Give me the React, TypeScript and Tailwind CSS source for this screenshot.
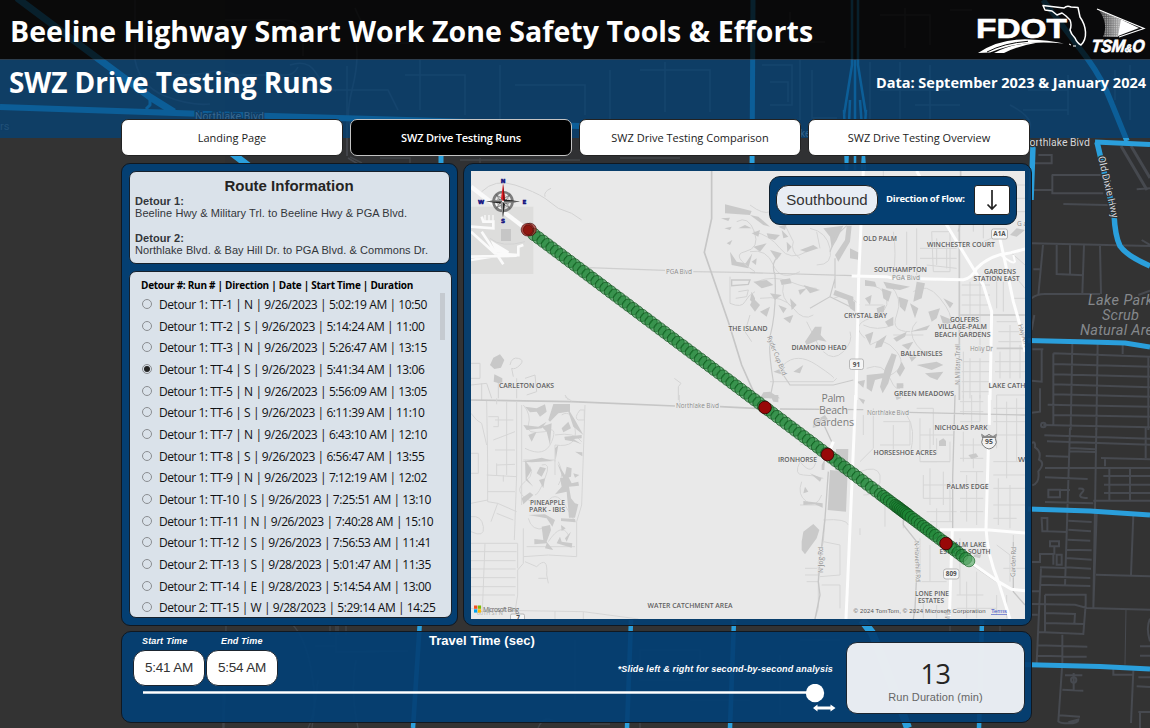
import React from 'react';

const runs = [
  'Detour 1: TT-1 | N | 9/26/2023 | 5:02:19 AM | 10:50',
  'Detour 1: TT-2 | S | 9/26/2023 | 5:14:24 AM | 11:00',
  'Detour 1: TT-3 | N | 9/26/2023 | 5:26:47 AM | 13:15',
  'Detour 1: TT-4 | S | 9/26/2023 | 5:41:34 AM | 13:06',
  'Detour 1: TT-5 | N | 9/26/2023 | 5:56:09 AM | 13:05',
  'Detour 1: TT-6 | S | 9/26/2023 | 6:11:39 AM | 11:10',
  'Detour 1: TT-7 | N | 9/26/2023 | 6:43:10 AM | 12:10',
  'Detour 1: TT-8 | S | 9/26/2023 | 6:56:47 AM | 13:55',
  'Detour 1: TT-9 | N | 9/26/2023 | 7:12:19 AM | 12:02',
  'Detour 1: TT-10 | S | 9/26/2023 | 7:25:51 AM | 13:10',
  'Detour 1: TT-11 | N | 9/26/2023 | 7:40:28 AM | 15:10',
  'Detour 1: TT-12 | S | 9/26/2023 | 7:56:53 AM | 11:41',
  'Detour 2: TT-13 | S | 9/28/2023 | 5:01:47 AM | 11:35',
  'Detour 2: TT-14 | E | 9/28/2023 | 5:14:54 AM | 13:00',
  'Detour 2: TT-15 | W | 9/28/2023 | 5:29:14 AM | 14:25',
];

const tabs = [
  { label: 'Landing Page', on: false },
  { label: 'SWZ Drive Testing Runs', on: true },
  { label: 'SWZ Drive Testing Comparison', on: false },
  { label: 'SWZ Drive Testing Overview', on: false },
];

/* ---------- dark street map behind the page ---------- */

function Backdrop() {
  return (
    <svg className="absolute inset-0 h-[728px] w-[1150px]" viewBox="0 0 1150 728" fill="none">
      <rect width="1150" height="728" fill="#333333" />
      <rect y="0" x="225" width="925" height="200" fill="#303133" />
      <g stroke="#46494f" strokeWidth="1.6">
        <path d="M135 0v60q5 26 30 36t45 8M150 72q35 6 60 0t48 22M225 20h60q12 0 18 12v24M228 75h58q8 0 12-8M347 66v90M352 30q10 20 0 60t8 46M290 65q18-6 26 8t20 18M300 90h88l10 20M348 158l10 6M405 75h60v40M420 60v50M500 65v60M515 85h70v30M610 70v55M640 70h70v42M665 62v50" />
        <path d="M762 65h30v40h-22M770 82h18v20M800 60v60M812 70v48h25M870 62v70M880 90h70M900 62v60M915 105h45M930 65v70M1028 90h40v20h-45M1068 75v40M1010 105q35 18 10 34M1115 70v30M1130 65v55M790 12v30h35M880 15h50v30M905 8v40M950 10h22M355 8q10 25 25 35h30" />
        <path d="M1121 146l26 44M1131 146l19 32" strokeWidth="3" />
      </g>
      <g transform="translate(1025 130) scale(.33333)" stroke="#474a50" strokeWidth="6">
        <path d="M20 100H80V75H40M25 180H80M80 135H230M82 135V190H235M115 222L270 226M20 340L375 348M54 345L40 495M25 418H44M95 345V432L175 436M135 345V435M177 345L172 490M225 348L228 492M20 505Q35 492 60 492L225 492M20 600L28 555M335 178L375 175M340 495L375 482M350 330L375 345" />
        <path d="M22 658H55M50 660V755L20 752M45 775V845L20 848M85 670L375 680M85 670V885M85 702L375 710M85 733L375 740M85 763L375 772M85 793L375 800M68 824L375 830M85 855L375 860M55 885L375 892M142 640L137 900M218 640L214 900M293 645V672M370 680V900" />
        <circle cx="55" cy="885" r="7" />
      </g>
      <g transform="translate(1025 428) scale(.33333)" stroke="#474a50" strokeWidth="6">
        <path d="M135 0L120 475M214 0L205 540M58 22L375 32M66 40L375 50M362 0V90M135 60L210 64M135 70L210 72M62 84L132 86M60 120H375M228 90L375 94M240 90V115M60 148L188 153M253 122V218M315 122V218M235 144H375M237 170H375M237 195H375M205 218H375M70 185H105V208H70ZM105 186H135M160 182Q185 180 170 195T188 210M60 222L205 226M20 45Q32 38 30 58Q50 70 42 95Q62 105 40 130Q45 165 22 172M50 270H67V310H52ZM67 310L125 312M130 278L200 282M130 305L198 310M128 335L196 338M126 365L200 367M124 390L200 395M122 418L198 422M45 445L196 450M45 470L196 474M75 340H102V355H75ZM88 355V380M20 402H45V378H85V410M45 418L120 420M95 380H110V410H95ZM215 258L205 540M325 262L318 440M213 440L375 445M20 528L150 530L185 540L375 545M60 500H182V530L175 618L40 612M60 500V610M62 555L150 558L148 588M60 585L175 588M48 420L35 705M40 652L187 656M38 683L185 686M112 620V705L100 880Q105 886 130 886Q160 886 160 875L130 883M103 862L165 866M120 742H172M146 735V785M112 785L175 788M265 720V740H325M325 728L318 885M340 852H375M345 855V900M375 572Q362 600 375 640M345 655H375M345 683H375M335 775L375 777M340 748H375M20 490H42M20 560H38" />
        <circle cx="146" cy="756" r="8" />
        <path d="M303 545L300 710" strokeWidth="3" />
      </g>
      <g stroke="#424549" strokeWidth="1.4">
        <path d="M226 626l-2 102M230 632q-8 40-7 96M292 624q14 14 20 50t-4 54M315 646h20M336 624v28l72-1M318 680l-6 48M356 660q-6 30 2 68M330 626v9M338 626v9M346 626v9M240 690q8-12 22-4M538 728q6-14 18-6M590 724h20M640 720v8M700 722h25M460 160h120M480 158v6M620 158h60M350 157l12 6M380 158h30v6" />
        <path d="M640 650h60v30h-60zM690 700h60M780 655v60M800 640h40M575 640v60M950 626v6h30M1000 626v8" />
      </g>
      <g stroke="#2a9fdc" strokeLinejoin="round">
        <path d="M17 -2L100 60L150 97L174 112M224 147L250 167" strokeWidth="7" />
        <path d="M150 97v8l-4 4" strokeWidth="3" />
        <path d="M0 107L190 113.500L440 121L1031 142" strokeWidth="6" />
        <path d="M1095 142L1150 144.500" strokeWidth="5" />
        <path d="M441 120v50M753 0l-1 170" strokeWidth="5" />
        <path d="M852 0v65l-8 50M858 0v65l8 50M855 60v50M844 110l2 60M850 100l-3 70M866 110l-4 60M860 100l5 70M855 110v60" strokeWidth="2.500" />
        <path d="M1043 0L1087 58Q1103 80 1112 104L1127 141" strokeWidth="5.500" />
        <path d="M1097 142L1114 214Q1115 236 1120 246Q1127 256 1150 266M1033 146L1031 200" strokeWidth="5.500" />
        <path d="M1028 340.500L1090 342L1125 343L1150 347M1028 509L1090 511L1150 515M1020 664.500L1100 666.500L1150 669" strokeWidth="5" />
        <path d="M420 620L413 728M631 620L627 728M734 620L730 728M982 620L979 728" strokeWidth="4.500" />
        <path d="M862 620L872 633L881 655L908 728" strokeWidth="8" />
      </g>
      <g fontFamily="Roboto, sans-serif" stroke="#303133" strokeWidth="2.500" paintOrder="stroke">
        <text x="195" y="120" fontSize="10.500" fill="#b8bcc2" textLength="69">Northlake Blvd</text>
        <text x="1022" y="146" fontSize="10.500" fill="#d5d8dc" textLength="68">Northlake Blvd</text>
        <text x="0" y="130" fontSize="11" fill="#6c7075">rs</text>
        <text x="800" y="137" fontSize="10" fill="#a8abb0">ke</text>
        <text transform="translate(1098 157) rotate(77)" fontSize="10" fill="#d5d8dc" textLength="63">Old Dixie Hwy</text>
        <g fontStyle="italic" fontSize="14.500" fill="#85888c" stroke="none">
          <text x="1088" y="305" textLength="65">Lake Park</text>
          <text x="1102" y="320" textLength="37">Scrub</text>
          <text x="1080" y="335" textLength="81">Natural Area</text>
        </g>
      </g>
    </svg>
  );
}

/* ---------- logos ---------- */

function Logos() {
  return (
    <svg className="h-[56px] w-[178px] shrink-0" viewBox="972 1 178 56" fill="none">
      <defs>
        <pattern id="dots" width="1.800" height="1.800" patternUnits="userSpaceOnUse">
          <rect width="1.100" height="1.100" fill="#fff" />
        </pattern>
        <linearGradient id="fade" x1="0" x2="1">
          <stop offset="0" stopColor="#fff" stopOpacity=".1" />
          <stop offset="1" stopColor="#fff" stopOpacity=".75" />
        </linearGradient>
      </defs>
      <text x="976" y="38.500" fontFamily="'Liberation Sans', sans-serif" fontWeight="700" fontSize="27.500" fill="#fff" stroke="#fff" strokeWidth=".6" textLength="91" lengthAdjust="spacingAndGlyphs">FDOT</text>
      <path d="M1043 6.500L1064 9Q1067 6 1071 8L1078 8.500L1080 18Q1085 25 1085.500 33Q1086 41 1081 46Q1077 44 1075 39Q1071 35 1070 31Q1072 26 1070 21L1066 17L1062 14L1057 16L1052 12L1045 11Z" stroke="#fff" strokeWidth="1.500" strokeLinejoin="round" />
      <path d="M1069 45l2 1M1073 47l3 0" stroke="#fff" />
      <path d="M978 54Q1001 39 1030 40.500Q1048 41 1064 44.500Q1034 41.500 1010 47Q1000 49.500 990 53.500Z" fill="#fff" />
      <path d="M994 54Q1012 44 1038 43.500Q1018 47 1004 54Z" fill="#fff" />
      <path d="M987 53Q1004 44 1028 42.300" stroke="#0b0b0b" strokeWidth="1" />
      <path d="M1098 10L1124 22L1118 38L1103 38Q1109 24 1098 10Z" fill="url(#dots)" fillOpacity=".5" />
      <path d="M1098 10L1124 22L1118 38L1103 38Q1109 24 1098 10Z" fill="url(#fade)" />
      <path d="M1097 10L1144 29.500L1119 38" stroke="#fff" strokeWidth="1.200" />
      <path d="M1121 20.500L1139 29L1118 37Z" fill="#fff" />
      <text transform="translate(1091 52.500) skewX(-6)" fontFamily="'Liberation Sans', sans-serif" fontStyle="italic" fontWeight="700" fontSize="17.500" fill="#fff" stroke="#fff" strokeWidth=".7" textLength="53" lengthAdjust="spacingAndGlyphs">
        TSM<tspan fontSize="11">&amp;</tspan>O
      </text>
    </svg>
  );
}

/* ---------- route map ---------- */

type Label = [string, number, number, number];

const places: Label[] = [
  ['OLD PALM', 863, 241, 34],
  ['WINCHESTER COURT', 927, 246.5, 68],
  ['SOUTHAMPTON', 874, 271.5, 53],
  ['GARDENS', 984, 274, 32],
  ['STATION EAST', 973.5, 281, 46],
  ['CRYSTAL BAY', 844, 318, 43],
  ['GOLFERS', 950, 322, 29],
  ['VILLAGE-PALM', 938, 329, 49],
  ['BEACH GARDENS', 934.5, 336.5, 56],
  ['THE ISLAND', 728.5, 330.5, 39],
  ['DIAMOND HEAD', 791.5, 350, 55],
  ['BALLENISLES', 900.5, 355.5, 42],
  ['LAKE CATHERINE', 988.5, 388, 57],
  ['GREEN MEADOWS', 894, 396, 60],
  ['CARLETON OAKS', 499, 388, 55],
  ['NICHOLAS PARK', 934.5, 430, 53],
  ['HORSESHOE ACRES', 873.5, 455, 63],
  ['IRONHORSE', 778, 462, 39],
  ['WEST', 1018, 462, 20],
  ['PALMS EDGE', 946.5, 488.5, 42],
  ['PINEAPPLE', 530, 505, 35],
  ['PARK - IBIS', 529, 512, 36],
  ['PALM LAKE', 950, 547, 36],
  ['ESTATES SOUTH', 939.5, 554, 51],
  ['LONE PINE', 915, 596, 34],
  ['ESTATES', 918, 603, 26],
  ['WATER CATCHMENT AREA', 647.5, 607.5, 85],
];

const redStops = [
  [765, 407.5],
  [827.5, 454.5],
  [946, 543.5],
];

function routePoints() {
  const pts: number[][] = [];
  let x = 534;
  while (x < 969) {
    const y = x < 765 ? 230 + ((x - 528) * 177.5) / 237 : x < 946 ? 407.5 + ((x - 765) * 136) / 181 : 543.5 + ((x - 946) * 17.5) / 23;
    pts.push([x, y]);
    x += x < 880 ? 4.5 : x < 893 ? 3 : x < 907 ? 1.6 : x < 935 ? 3 : 3.8;
  }
  return pts;
}

function RouteMap() {
  return (
    <svg className="block h-[448px] w-[554px]" viewBox="471 171 554 448" fill="none">
      <rect x="471" y="171" width="554" height="448" fill="#e9e9e9" />

      {/* north-west quarter */}
      <g transform="translate(465 165) scale(.33333)">
        <path d="M18 125H205V327H18Z" fill="#dddddc" />
        <path d="M108 192h30v36h-30z" fill="#c6c6c6" />
        <g stroke="#fafafa" strokeWidth="8">
          <path d="M18 65L200 205" strokeWidth="13" />
          <path d="M50 155L55 170H85V190L18 185M18 200L90 265L160 270V245L175 240M50 200L115 298M18 275L155 272M18 285L110 270" />
          <path d="M72 150v18M60 150v18M84 150v18" strokeWidth="4" />
          <path d="M85 235L130 262L95 258Z" fill="#fafafa" />
        </g>
        <g stroke="#d3d3d3" strokeWidth="3">
          <path d="M50 80Q90 40 150 60T240 100L280 130L320 145L350 165M240 95Q235 80 258 70M75 220Q110 250 180 230" />
          <path d="M18 595H45V640H18M18 660L65 655L80 700M50 655V705M135 600Q140 575 160 580T165 600T140 610L145 635M180 640L210 630L215 680L185 690M100 640V700M155 640V700M300 690L310 705M628 640L648 655L640 665V705" />
        </g>
        <path d="M75 600L85 578L105 568L118 585L108 608L88 612ZM88 628L112 640V658L86 650Z" fill="#c8c8c8" />
        <path d="M370 308L600 316M685 320L870 323" stroke="#cfcfcf" strokeWidth="4" />
        <path d="M740 18V160L718 262L790 470L830 600L870 690" stroke="#c6c6c6" strokeWidth="5" />
        <path d="M780 118L860 138L855 150L780 145ZM768 160L795 158L790 168ZM778 190L800 185L795 195ZM785 235L802 225L795 240ZM820 190L840 180L860 190M795 260L800 300L850 310L862 265L842 295L815 290ZM860 380L870 400V420L855 405Z" fill="#c9c9c9" />
        <path d="M800 345H855L850 358L800 362Z" stroke="#c9c9c9" strokeWidth="4" />
        <path d="M815 170Q850 150 868 200T840 260T870 320M795 335V415Q830 430 840 410T870 380M855 450L840 500L860 530M820 380L850 375L845 395L812 400" stroke="#d3d3d3" strokeWidth="3" />
      </g>

      {/* north-east quarter */}
      <g transform="translate(750 165) scale(.33333)">
        <g stroke="#d5d5d5" strokeWidth="3">
          <path d="M400 18V180M430 200Q440 260 430 340M470 200V300M500 190V340M545 200H600V320H550ZM560 220V300M590 230V310M510 250H620M510 280H620M530 300L620 310M640 40V170M670 40V200M700 60V220M630 60H740M630 90H740M630 120H740M630 150H740M760 30V180M790 40V170M745 60H825M745 100H825M745 140H825" />
          <path d="M0 120Q40 150 60 140T100 170L130 230Q120 260 150 280M10 200Q60 210 90 250T170 260M0 260Q50 250 70 300T150 320M20 350Q70 330 120 350T200 370M30 400Q100 390 130 430T190 450M100 360Q90 400 130 430M180 190Q230 200 240 250T200 300M200 200L210 250M250 400Q290 380 330 420M345 360Q400 360 410 400T360 460T345 520M420 360Q460 400 440 450T480 500M490 380Q530 350 570 400T600 470M500 470Q470 500 500 540T560 560M360 540Q400 510 440 560T400 640M350 610Q400 590 420 640T460 660M60 650H250L260 640M100 600Q140 560 200 600T250 640M170 470L210 550M220 560Q250 590 280 560T300 500M345 420H400M430 510H520M340 480Q380 500 430 480" />
          <path d="M635 360H720M635 390H720M635 420H720M635 450H820M660 350V500M690 340V560M640 560V700M660 580V700M690 580V700M635 590H720M635 620H720M635 650H720M635 680H720M740 330V430M760 350V440M740 470H800M745 500H810M745 530H820M750 560V640M780 480V640M810 540V640M735 590H825M735 620H825M740 690H825M800 340L825 370M790 400H825M780 260L825 300M700 230L770 200" />
        </g>
        <g fill="#c9c9c9">
          <path d="M60 150L90 160L85 172L68 165ZM85 185L110 178L105 195ZM0 150L25 155L60 185L40 180ZM5 205L30 195L25 215ZM50 205L90 210L75 225L55 220ZM10 245L50 235L30 260ZM95 195L115 215L100 220ZM220 190L280 182L260 225L245 250L240 215ZM290 182L305 182L300 230L265 290L255 270L285 225ZM300 250L330 265V285L300 280ZM60 255L95 265L80 285ZM110 230L125 245L112 262ZM150 255L190 240L205 250L170 262ZM5 290L20 280L18 300Z" />
          <path d="M10 350L50 345L70 360L35 370ZM90 345L120 340L125 355L95 360ZM145 375L170 370L150 390ZM60 385L95 390L75 405ZM120 400L140 420L125 435ZM10 400L30 420L15 440L0 420ZM30 440L60 425L50 455ZM160 360L210 375L180 385ZM255 375L310 395V412L250 390ZM290 400L315 410V440L300 430ZM165 530L195 485H215L212 510L230 530L205 525L170 540ZM85 420L110 430L100 445ZM100 460L130 450L120 475Z" />
          <path d="M345 345L375 350L380 365L345 362ZM400 350L480 365L450 375L410 370ZM500 350L525 355L515 400L490 410ZM395 370L425 380L415 410L400 400ZM445 395L475 405L465 440L450 425ZM480 415L505 430L495 460ZM345 400L365 390L360 420ZM380 430L405 420L400 450L385 460ZM405 470L430 455L430 480L415 485ZM535 440L570 430L560 460L545 470ZM580 400L610 415L600 430ZM570 450L620 470L580 480ZM430 520L470 500L465 515L440 530ZM480 500L540 480L530 495ZM345 510L370 500L360 540ZM380 530L410 510L395 545L375 550Z" />
          <path d="M350 630L400 625L412 635L375 645L365 680L350 670ZM405 610L425 565L440 570L425 620L415 655L398 685L390 665ZM440 620L455 590L465 610L450 635ZM500 600L560 590L580 600L545 615ZM525 625L580 620L562 645L540 637ZM470 560L500 575L485 590ZM60 680L90 700H30L40 682ZM70 620L95 610L100 630ZM130 620L160 600L150 625ZM320 650L345 645L340 668ZM455 540L490 530L475 555ZM440 655h20v15h-20zM780 210L800 190L825 195L800 215Z" />
        </g>
        <g stroke="#cacaca" strokeWidth="5">
          <path d="M0 323L310 332M240 260L260 210L290 182M255 340L240 395L180 430M255 280V370M240 395L310 430M60 700L70 650Q55 560 60 515M60 515Q80 440 75 330Q60 290 90 270M100 630L120 660L250 660L310 645" strokeWidth="3.500" />
          <path d="M628 180V705M632 18V180M630 450H825M740 550H825M630 180L625 200" />
        </g>
        <g stroke="#fdfdfd" strokeWidth="9">
          <path d="M340 18L326 340L318 705M500 18L590 180L700 360L725 440L720 705M305 333L410 335L430 340L640 344Q665 340 680 310Q720 270 775 265L825 252M745 200L765 290L790 410L810 480L825 560" />
          <path d="M750 268Q790 300 795 290L790 270" strokeWidth="6" />
        </g>
      </g>

      {/* south-west quarter */}
      <g transform="translate(465 395) scale(.33333)">
        <path d="M18 15L320 20L630 33M765 35L870 40" stroke="#c6c6c6" strokeWidth="5" />
        <g stroke="#d6d6d6" strokeWidth="3">
          <path d="M65 18L68 205V320L98 325L155 350M18 55L35 75L50 85L65 150M95 10V28M155 18V240L148 435M125 20V240M90 75H145M85 135L150 110M90 165L150 165M95 205V240M95 210L150 208M18 175H40V235H18M65 240L155 245M68 290H150M18 325L68 315M98 325L78 380M95 355L145 375M18 365Q50 360 55 395T18 410M300 5L320 18M643 0V25M70 65H100V95H85M115 240V260" />
          <path d="M170 30V330M360 30L350 330L335 380V485L250 480L175 485V400M175 30Q200 60 190 90T240 110Q280 90 260 140T180 160M270 120Q330 110 350 140M290 60Q320 40 330 100T270 150V200M345 45Q325 70 340 75H358V45ZM175 195H270V240M180 200Q220 230 180 260T200 320M230 210Q260 200 240 250T210 300M280 200Q300 240 280 270M240 330Q270 280 300 330T330 380M190 370Q200 410 240 400M250 440Q290 380 310 420M185 455H330M175 485V505L158 525V600L150 650M180 500L215 515Q250 480 245 540L250 565M220 550H245" />
          <path d="M18 445H158V520M60 445L52 650M18 470H155M18 497H152M18 522H152M18 548H152M18 575H152M18 600H150M18 640L50 645L355 650L520 672M270 648V672M355 650V672" />
        </g>
        <g fill="#cacaca">
          <path d="M265 27H315V50L330 75L355 120L325 95L310 50L280 55L255 80L250 75ZM180 35L215 40L240 28L245 50L225 65L215 50L195 52ZM175 90L220 95L245 80L230 100L185 105ZM190 120L215 110L200 140ZM230 95L260 85L255 150L245 110ZM290 100L310 80L318 100L295 112ZM298 125L350 120V130L325 132L350 148L330 140L300 135ZM270 160L280 150L272 195ZM170 200L230 188L265 198L200 202ZM180 195L200 225L185 250L205 275L182 255ZM225 215L243 220L230 245L215 235ZM222 255L240 250L235 280ZM277 205L300 240L305 215L320 220L318 245L295 252ZM330 170L352 172V184ZM285 250L310 245L320 265L340 260L342 272L312 275L318 310L330 325L340 328L330 368H312L305 290L270 298L290 275ZM325 235L343 240L330 248ZM170 310L195 292L205 300L175 328ZM190 360L240 358L270 375L262 395L245 370ZM288 370L330 372L332 382L288 378ZM230 395L255 390L258 405L245 440L265 465L240 460L245 445L208 448V432L235 435ZM288 390L302 400L290 408ZM275 445L285 425L290 440L322 445L320 458ZM300 430L318 410L305 440Z" />
        </g>
      </g>

      {/* south-east quarter */}
      <g transform="translate(750 395) scale(.33333)">
        <g stroke="#d6d6d6" strokeWidth="3">
          <path d="M340 60V120M370 40V160L330 200M400 80H480V150H390M430 90V170M470 60Q500 100 480 180M510 70V200H560M540 100V180M510 120H610M560 130V180M600 140V200H510M350 300L390 265V240Q380 210 330 230M405 300V395M340 300Q400 290 460 330V400M520 200H600M520 240V310M540 220V330M580 230V330M600 260V380M520 270H610M520 310H610M530 350H620M560 340V400M540 380H610" />
          <path d="M630 20H700M640 0V60M665 0V90M690 0V80M630 50H700M630 80H690M640 110V200M670 130V220M630 150H700M630 190H700M630 230H700M650 240V380M680 230V390M630 270H700M630 310H700M630 350H700M740 0V160M770 20V250M800 10V200M730 40H825M730 80H825M730 120H825M730 200H825M730 240H825M730 280H825M745 250V390M780 270V400M730 330H825M730 370H800M510 430V540M540 450V560M630 430V600M650 560V670M680 530V670M510 560H590M520 620V670M560 630V670M620 640H740M620 600H700M740 600V660M770 600V670M740 450L780 480V560M790 420V440M760 520H825" />
          <path d="M155 130Q210 130 200 190T150 200Q130 240 160 240T220 250M155 260Q140 300 170 320T215 300M180 140L150 150M150 330H210M220 375Q290 370 295 390M225 375L220 440L205 500V640L195 672M220 440L270 450V540L210 545M215 570H270V640M165 520H205M165 540H205M170 560H205M500 40H550V150M330 420V400" />
        </g>
        <g fill="#c9c9c9">
          <path d="M258 162H295L293 230L255 225ZM240 225L293 230L288 350L233 345ZM155 440L160 410L190 387L208 405L200 430L165 478L155 465ZM190 80L225 60L235 75L205 95L188 98ZM215 210L225 190L223 225H215ZM160 318L218 325V338L195 328L160 330ZM180 235L215 250L210 260ZM175 290L165 275L160 295ZM567 138L580 130L588 138V153H567ZM655 180L678 175L685 185L665 192ZM675 470L695 475L690 490L670 485ZM325 8L345 15L340 28ZM60 0H85V22L70 20ZM435 0L455 8L440 15Z" />
        </g>
        <g stroke="#c6c6c6" strokeWidth="5">
          <path d="M90 42L340 44M475 52L825 60M615 0L608 250V400M235 230L225 370L212 480L205 560L210 600L195 672M215 75L245 140M460 370V390L500 440V540L495 640L490 672M790 440V590L825 630M660 505L740 560" strokeWidth="4" />
        </g>
        <g stroke="#fdfdfd" strokeWidth="9">
          <path d="M317 0L303 330L288 672M718 0V90M715 160L708 400Q712 480 745 560L780 672M570 404H710L825 414M607 405L603 520M602 550L598 672M660 500L745 560L785 583L825 587M250 140L240 165" />
        </g>
        <path d="M695 118L705 126L717 118L729 126L739 118Q733 130 739 142Q735 158 717 162Q699 158 695 142Q701 130 695 118Z" fill="#f2f2f2" stroke="#777" strokeWidth="3" />
        <path d="M697 122L737 122L735 129H699Z" fill="#888" />
      </g>

      {/* place names */}
      <g fontFamily="'Open Sans', sans-serif" fill="#606060" fontSize="6.900" fontWeight="600" stroke="#ececec" strokeWidth="1.200" paintOrder="stroke">
        {places.map(([t, x, y, w]) => (
          <text key={t} x={x} y={y} textLength={w} lengthAdjust="spacingAndGlyphs">{t}</text>
        ))}
      </g>
      <g fontFamily="'Open Sans', sans-serif" fill="#7a7a7a" fontSize="10.500" stroke="#ececec" strokeWidth="1.200" paintOrder="stroke">
        <text x="821.500" y="402" textLength="23.500">Palm</text>
        <text x="819" y="414" textLength="29">Beach</text>
        <text x="813" y="426" textLength="41">Gardens</text>
      </g>
      <g fontFamily="'Open Sans', sans-serif" fill="#8c8c8c" fontSize="6.500" stroke="#e9e9e9" strokeWidth="1.500" paintOrder="stroke">
        <text x="666" y="273.500" textLength="26">PGA Blvd</text>
        <text x="892" y="280" textLength="28">PGA Blvd</text>
        <text x="676" y="408" textLength="43">Northlake Blvd</text>
        <text x="867" y="414.500" textLength="42">Northlake Blvd</text>
        <text x="970" y="350.500" textLength="23">Holly Dr</text>
        <text x="1017" y="226" textLength="20">Gard</text>
        <text transform="translate(959.500 385) rotate(-90)" textLength="41">N Military Trail</text>
        <text transform="translate(822.500 573) rotate(-90)" textLength="26">N Jog Rd</text>
        <text transform="translate(914.500 541) rotate(88)" textLength="41">N Haverhill Rd</text>
        <text transform="translate(1015 577) rotate(-88)" textLength="30">Garden Rd</text>
        <text transform="translate(767 337) rotate(68)" textLength="42">Ryder Cup Blvd</text>
        <text transform="translate(1018 325) rotate(72)" textLength="23">Hwy A1A</text>
        <text transform="translate(950 622) rotate(-90)" textLength="12">Mil</text>
      </g>
      <g fontFamily="'Open Sans', sans-serif" fontWeight="700" fontSize="6.400" fill="#505050" textAnchor="middle">
        <rect x="991.500" y="229" width="16" height="10" rx="2" fill="#f5f5f5" stroke="#aaa" strokeWidth=".8" />
        <text x="999.500" y="236.300">A1A</text>
        <rect x="849.500" y="359" width="14" height="10.500" rx="2" fill="#f5f5f5" stroke="#aaa" strokeWidth=".8" />
        <text x="856.500" y="366.600">91</text>
        <text x="989" y="444.300" fontSize="6.800">95</text>
        <rect x="943.500" y="569" width="15.500" height="10" rx="2.500" fill="#f5f5f5" stroke="#aaa" strokeWidth=".8" />
        <text x="951.300" y="576.300">809</text>
        <rect x="510.500" y="614" width="14" height="9" rx="1.500" fill="#f5f5f5" stroke="#aaa" strokeWidth=".8" />
        <text x="518" y="620">7</text>
      </g>

      {/* route */}
      <g fill="#1c8434" fillOpacity=".62" stroke="#0c4a17" strokeWidth=".75" strokeOpacity=".85">
        {routePoints().map(([x, y]) => (
          <circle key={x} cx={x} cy={y} r="6.200" />
        ))}
      </g>
      <circle cx="969" cy="561" r="5.800" fill="#5aa968" fillOpacity=".7" stroke="#1d6b2b" strokeWidth=".7" />
      <g fill="#980808" stroke="#3d0303" strokeWidth=".9">
        <circle cx="530" cy="229.500" r="6.300" fill="#a02a22" fillOpacity=".7" strokeWidth=".6" />
        <circle cx="527.500" cy="229.700" r="6.300" fill="#a02a22" fillOpacity=".8" strokeWidth=".6" />
        <circle cx="528" cy="230" r="4.800" fill="#8f1710" strokeWidth=".4" />
        {redStops.map(([x, y]) => (
          <circle key={x} cx={x} cy={y} r="6.300" />
        ))}
      </g>

      {/* compass */}
      <g transform="translate(503 201.500)">
        <circle r="9.500" stroke="#7c7c7c" strokeWidth="2.600" />
        <circle r="6" stroke="#b5b5b5" strokeWidth=".8" />
        <path d="M-7-7L0-2L7-7L2 0L7 7L0 2L-7 7L-2 0Z" fill="#eee" stroke="#555" strokeWidth=".7" />
        <path d="M0-18L2.200-1H-2.200Z" fill="#e11b22" />
        <path d="M0-18L2.200-1H0Z" fill="#8c1014" />
        <path d="M0 16L2.200 1H-2.200ZM-17 0L-1-2.200V2.200ZM17 0L1-2.200V2.200Z" fill="#222" />
        <path d="M-17 0L-1-2.200V0ZM17 0L1 2.200V0ZM0 16L-2.200 1H0Z" fill="#999" />
        <g fontFamily="'DejaVu Sans', sans-serif" fontWeight="700" fontSize="5.600" fill="#10107e" stroke="#10107e" strokeWidth=".5" textAnchor="middle">
          <text y="-18.500">N</text>
          <text y="21.500">S</text>
          <text x="-22" y="2">W</text>
          <text x="21.500" y="2">E</text>
        </g>
      </g>

      {/* attribution */}
      <text x="477" y="614.500" fontFamily="'Open Sans', sans-serif" fontSize="5.500" fill="#aaa" textLength="26">60TH ST N</text>
      <rect x="474" y="605.500" width="3.300" height="3.300" fill="#f25022" />
      <rect x="477.800" y="605.500" width="3.300" height="3.300" fill="#7fba00" />
      <rect x="474" y="609.300" width="3.300" height="3.300" fill="#00a4ef" />
      <rect x="477.800" y="609.300" width="3.300" height="3.300" fill="#ffb900" />
      <text x="483" y="611.500" fontFamily="'Open Sans', sans-serif" fontSize="6.500" fill="#6b6b6b" textLength="36">Microsoft Bing</text>
      <g fontFamily="'Liberation Sans', sans-serif" fontSize="6">
        <text x="853.500" y="613" fill="#555" textLength="132">© 2024 TomTom, © 2024 Microsoft Corporation</text>
        <text x="991" y="613" fill="#3b4fc4" textDecoration="underline" textLength="16">Terms</text>
      </g>
    </svg>
  );
}

/* ---------- page ---------- */

export default function App() {
  return (
    <div className="relative h-[728px] w-[1150px] overflow-hidden bg-[#333333] font-['Open_Sans',sans-serif]">
      <Backdrop />
      <div className="relative flex flex-col">
        <header className="flex h-[59px] items-start justify-between bg-black/80">
          <h1 className="ml-[10px] mt-[11px] whitespace-nowrap text-[28.500px] font-bold leading-[40px] tracking-[0.05px] text-white">
            Beeline Highway Smart Work Zone Safety Tools &amp; Efforts
          </h1>
          <Logos />
        </header>
        <div className="flex h-[79px] items-start justify-between border-t border-[#4a3c36]/50 bg-[#00437ab3]">
          <h2 className="ml-[9px] mt-[2px] whitespace-nowrap text-[28px] font-bold leading-[40px] tracking-[-0.1px] text-white">SWZ Drive Testing Runs</h2>
          <p className="mr-[4px] mt-[12px] whitespace-nowrap text-[14.500px] font-bold leading-[22px] tracking-[0px] text-white">
            Data: September 2023 &amp; January 2024
          </p>
        </div>

        <main className="-mt-[19px] ml-[121px] flex w-[911px] flex-col">
          <nav className="flex h-[37px] gap-[7px]">
            {tabs.map((t) => (
              <button
                key={t.label}
                className={
                  t.on
                    ? 'flex w-[222px] items-center justify-center rounded-[7px] border border-[#c4c4c4] bg-black pt-[2px] text-[11px] font-semibold tracking-[-0.2px] text-white'
                    : 'flex w-[222px] items-center justify-center rounded-[7px] border border-[#222] bg-white pt-[2px] text-[11px] tracking-[0px] text-[#1c1c1c]'
                }
              >
                {t.label}
              </button>
            ))}
          </nav>

          <div className="mt-[7px] flex gap-[5px]">
            <section className="flex h-[463px] w-[337px] flex-col gap-[7px] rounded-[9px] border border-[#111820] bg-[#043f72] px-[7px] pt-[7px]">
              <div className="flex h-[93px] w-[321px] flex-col rounded-[7px] border border-[#16212c] bg-[#dae2ea] pl-[5px] font-['Liberation_Sans',sans-serif] text-[11px] leading-[12px] tracking-[0.08px] text-[#33363a]">
                <h3 className="pr-[6px] pt-[5px] text-center text-[15px] font-bold leading-[18px] tracking-[0px] text-[#252423]">Route Information</h3>
                <p className="font-bold">Detour 1:</p>
                <p className="whitespace-nowrap">Beeline Hwy &amp; Military Trl. to Beeline Hwy &amp; PGA Blvd.</p>
                <p className="mt-[13px] font-bold">Detour 2:</p>
                <p className="whitespace-nowrap">Northlake Blvd. &amp; Bay Hill Dr. to PGA Blvd. &amp; Commons Dr.</p>
              </div>
              <div className="flex h-[347px] w-[323px] flex-col overflow-hidden rounded-[7px] border border-[#16212c] bg-[#dae2ea]">
                <h3 className="ml-[11px] mt-[6px] h-[15px] whitespace-nowrap text-[10px] font-bold leading-[15px] tracking-[-0.27px] text-black">
                  Detour #: Run # | Direction | Date | Start Time | Duration
                </h3>
                <div className="flex min-h-0 flex-1 overflow-hidden">
                  <ul className="w-[300px] shrink-0 pt-px">
                    {runs.map((r, i) => (
                      <li key={r} className="flex h-[21.700px] items-center pl-[12px]">
                        <span className="mb-[2px] flex size-[10px] shrink-0 items-center justify-center rounded-full border border-[#8a8d91]">
                          {i === 3 && <span className="size-[6px] rounded-full bg-[#222]" />}
                        </span>
                        <span className="ml-[7px] whitespace-nowrap text-[12px] tracking-[-0.42px] text-[#111113]">{r}</span>
                      </li>
                    ))}
                  </ul>
                  <div className="ml-[10px] h-[47px] w-[5px] bg-[#c5cad0]" />
                </div>
              </div>
            </section>

            <section className="relative h-[463px] w-[569px] rounded-[10px] border border-[#111820] bg-[#063f70f2] p-[7px]">
              <RouteMap />
              <div className="absolute left-[305px] top-[12px] flex h-[49px] w-[248px] items-center rounded-[11px] border border-[#10202e] bg-[#043f72] pl-[6px]">
                <span className="-mt-[1px] flex h-[30px] w-[102px] items-center justify-center rounded-[12px] border border-[#222] bg-[#e8edf4] font-['Liberation_Sans',sans-serif] text-[15px] tracking-[0.05px] text-[#333]">
                  Southbound
                </span>
                <span className="-mt-[3px] ml-[8px] w-[79px] whitespace-nowrap text-[9.500px] font-bold tracking-[-0.25px] text-white">Direction of Flow:</span>
                <span className="-mt-[1px] ml-[9px] flex h-[30px] w-[36px] items-center justify-center rounded-[3px] border border-[#222] bg-white">
                  <svg className="h-[22px] w-[14px]" viewBox="0 0 14 22" fill="none" stroke="#222" strokeWidth="1.700">
                    <path d="M7 1v18M2.500 15.500L7 20l4.500-4.500" />
                  </svg>
                </span>
              </div>
            </section>
          </div>

          <section className="mt-[5px] flex h-[92px] w-[911px] rounded-[10px] border border-[#111820] bg-[#033f74ed] font-['Liberation_Sans',sans-serif]">
            <div className="flex w-[724px] flex-col">
              <div className="flex">
                <div className="ml-[11px] flex w-[147px] gap-[1px]">
                  <div className="flex w-[72px] flex-col">
                    <span className="ml-[9px] mt-[3px] whitespace-nowrap text-[9px] font-bold italic leading-[12px] tracking-[0.15px] text-white">Start Time</span>
                    <span className="mt-[3px] flex h-[36px] items-center justify-center rounded-[12px] border border-[#1b2530] bg-white text-[13.500px] tracking-[-0.2px] text-[#333]">5:41 AM</span>
                  </div>
                  <div className="flex w-[72px] flex-col">
                    <span className="ml-[15px] mt-[3px] whitespace-nowrap text-[9px] font-bold italic leading-[12px] tracking-[0.15px] text-white">End Time</span>
                    <span className="mt-[3px] flex h-[36px] items-center justify-center rounded-[12px] border border-[#1b2530] bg-white text-[13.500px] tracking-[-0.2px] text-[#333]">5:54 AM</span>
                  </div>
                </div>
                <div className="flex flex-1 flex-col">
                  <span className="ml-[149px] mt-[1px] whitespace-nowrap text-[13px] font-bold leading-[16px] tracking-[0.03px] text-white">Travel Time (sec)</span>
                  <span className="mr-[13px] mt-[14px] whitespace-nowrap text-right text-[9px] font-bold italic leading-[12px] tracking-[0.17px] text-white">
                    *Slide left &amp; right for second-by-second analysis
                  </span>
                </div>
              </div>
              <svg className="-mt-[2px] ml-[20px] h-[32px] w-[700px] shrink-0" viewBox="142 684 700 32">
                <path d="M143 692.500H815" stroke="#fff" strokeWidth="2.400" />
                <circle cx="815" cy="693" r="9.200" fill="#fff" />
                <path d="M813 708l4.500-3.500v2h13v-2l5 3.500l-5 3.500v-2h-13v2z" fill="#fff" />
              </svg>
            </div>
            <div className="mt-[10px] flex h-[72px] w-[179px] flex-col items-center rounded-[11px] border border-[#1b2530] bg-[#eef1f5f8] text-[#252423]">
              <span className="mt-[15px] font-['Open_Sans',sans-serif] text-[27px] leading-[32px] tracking-[-0.5px]">13</span>
              <span className="mt-[1px] text-[11px] leading-[13px] tracking-[0.08px] text-[#666]">Run Duration (min)</span>
            </div>
          </section>
        </main>
      </div>
    </div>
  );
}
